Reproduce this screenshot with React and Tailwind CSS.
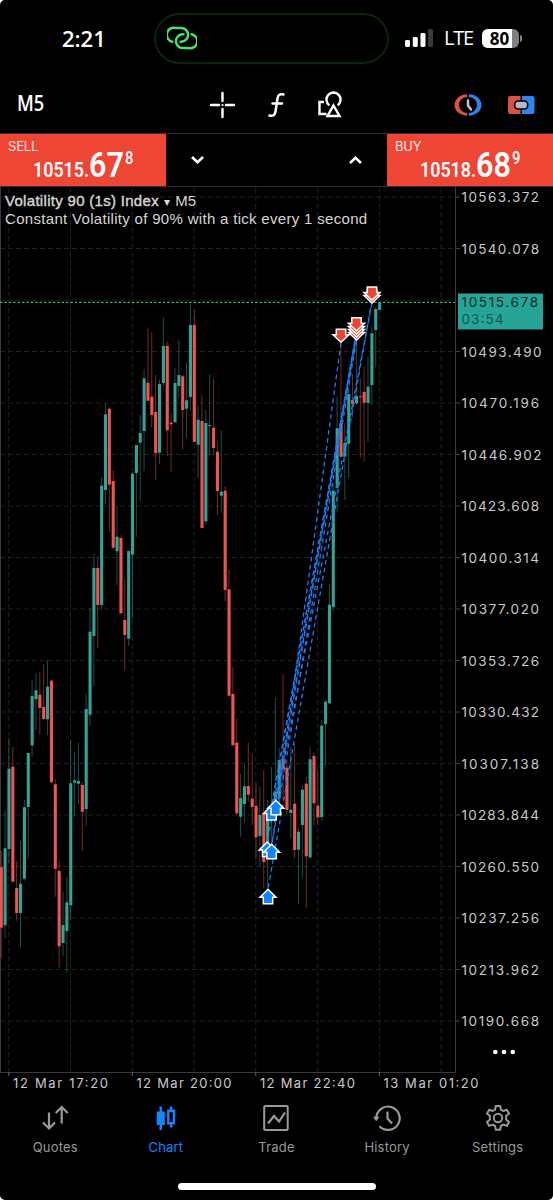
import React from "react";

// [high, bodyTop, bodyBottom, low, isUp]
const candles = [
  [851, 867.3, 927.7, 958, 0], [810, 848.3, 925.3, 938, 1], [738.3, 768.7, 849, 863, 1], [746.7, 766.7, 881.7, 882, 0],
  [860.7, 888, 913, 920.7, 0], [841, 883.7, 913, 946.7, 1], [800, 807.3, 878.7, 880.7, 1], [753, 753, 807, 858.3, 1],
  [680, 696, 745.3, 756.7, 1], [673.3, 690.3, 699.3, 730, 1], [671.7, 694.7, 708, 735, 0], [664.3, 707, 719, 720, 0],
  [660, 686.7, 719.3, 735, 1], [680, 680.7, 782.3, 782.3, 0], [778.7, 784.3, 868.7, 896.7, 0], [860, 871, 946.3, 967.7, 0],
  [891.7, 925, 943, 956, 1], [876.7, 902.3, 931, 972.7, 1], [740, 783.3, 905.3, 920, 1], [751.7, 780.3, 782.7, 816.7, 1],
  [742.7, 781, 783.7, 804, 1], [781.7, 785, 811.7, 850.7, 0], [693.3, 709, 809, 826, 1], [608.3, 631.7, 714.7, 726, 1],
  [553.3, 568, 636, 686.7, 1], [557.3, 568, 605, 647.7, 0], [477.3, 485.7, 605, 610, 1], [403.3, 414.3, 490, 504, 1],
  [408.3, 408.7, 484.7, 531.7, 0], [470, 481, 547.7, 549.3, 0], [506, 536.7, 551.3, 585, 1], [535, 538, 613.3, 613.3, 0],
  [579, 620, 635, 670, 0], [551, 551, 638.7, 646, 1], [472, 473.7, 554.7, 618.3, 1], [445, 445, 473, 536.7, 1],
  [415, 433, 442.7, 500.7, 1], [369.3, 378.3, 431, 471, 1], [328.3, 382.7, 400.7, 401.7, 0], [332.3, 396.7, 415, 427.3, 0],
  [375, 412, 453, 480, 0], [380, 384, 452.7, 464, 1], [317.3, 346, 383, 386.7, 1], [341.3, 346, 430.3, 456, 0],
  [412.7, 422.7, 424.3, 472.3, 0], [367.7, 383, 422.3, 422.3, 1], [340, 375, 386, 398.3, 1], [374.7, 376.3, 410, 449.3, 0],
  [362.7, 400.3, 408.7, 438, 1], [303.3, 325, 397, 410, 1], [310, 325, 442, 442, 0], [405.7, 419.7, 444.7, 477.7, 1],
  [395, 421, 528, 528, 0], [409.3, 423, 521.3, 525, 1], [374.3, 425, 426, 455, 1], [378.3, 427.7, 448, 455, 0],
  [441.7, 451.7, 491, 515, 0], [430.7, 491.7, 495.7, 512.3, 1], [486, 490.7, 590, 601.7, 0], [569.3, 589.3, 695.7, 696.7, 0],
  [666.7, 694, 745.3, 745.3, 0], [718.3, 742.7, 813.3, 815, 0], [773.3, 798, 816.7, 836.7, 1], [763.3, 786.3, 804, 822.7, 1],
  [742.7, 786, 794.7, 801.7, 0], [754, 798.7, 807, 825, 0], [783.3, 806, 837.3, 859, 0], [786.7, 815, 836, 866.7, 1],
  [770, 813, 862, 888.3, 0], [800, 815, 850, 890, 1], [767, 808, 815, 850, 1], [697, 792, 800, 810, 1],
  [747.7, 760, 798, 800, 1], [674, 759, 769, 800, 0], [760, 767.7, 810, 815, 0], [747, 809.7, 813, 838, 1],
  [744.3, 803.7, 850, 858.3, 0], [828, 831.7, 849.7, 904, 1], [785, 789.7, 825, 877.3, 1], [776.7, 783.7, 856.3, 908.3, 0],
  [747.3, 759.3, 857.3, 859, 1], [752.3, 756, 803.3, 825, 0], [769.3, 805.7, 817.3, 825, 0], [720, 725.7, 817, 821, 1],
  [700, 701.7, 724, 765.7, 1], [584, 604.7, 703.3, 704, 1], [483, 490.7, 607, 611.7, 1], [396.7, 428.3, 487.7, 511.7, 1],
  [338, 423.3, 456.7, 458, 0], [423.3, 442.7, 456.7, 500, 1], [390, 394, 443.7, 478.3, 1], [374, 400, 404, 417.3, 0],
  [330, 396, 403.3, 405, 1], [378.3, 396.3, 397.3, 457.7, 0], [366.7, 392, 402.7, 461.7, 0], [356.7, 386.7, 403, 441.7, 1],
  [326, 333.3, 385, 405, 1], [307.3, 309, 330, 367.3, 1], [302, 302.5, 310, 310, 1],
];

const prices = [
  "10563.372", "10540.078", "", "10493.490", "10470.196", "10446.902", "10423.608", "10400.314", "10377.020",
  "10353.726", "10330.432", "10307.138", "10283.844", "10260.550", "10237.256", "10213.962", "10190.668",
];

const times = [
  { x: 13, tick: 8.8, label: "12 Mar 17:20" },
  { x: 136.5, tick: 132.3, label: "12 Mar 20:00" },
  { x: 260, tick: 255.8, label: "12 Mar 22:40" },
  { x: 383.5, tick: 379.4, label: "13 Mar 01:20" },
];

// [entryX, entryY, exitX, exitY]
const trades = [
  [272, 844, 341, 343],
  [276, 802, 356.3, 332],
  [271.5, 806, 356.3, 335],
  [267.5, 842, 356.3, 338],
  [272, 844, 356.3, 341],
  [272, 806, 356.3, 334],
  [268, 889, 372, 300],
  [276, 802, 372, 303],
];

const buys = [[271.5, 805.5], [275.8, 800.3], [267.2, 842], [271.6, 844.3], [268, 889.3]];
const sells = [[341, 343.3], [356.5, 341], [356.5, 338], [356.5, 335], [356.5, 331.8], [372, 304], [372, 301]];

const tabs = [
  { name: "Quotes", icon: <QuotesIcon /> },
  { name: "Chart", icon: <ChartIcon />, active: true },
  { name: "Trade", icon: <TradeIcon /> },
  { name: "History", icon: <HistoryIcon /> },
  { name: "Settings", icon: <SettingsIcon /> },
];

function QuotesIcon() {
  return (
    <svg width="28" height="28" viewBox="0 0 28 28" fill="none" stroke="currentColor" strokeWidth="2.2">
      <path d="M8 8.500v16M2 18.500l6 6 6-6M20.700 19.500V3M14.700 9l6-6 6 6" />
    </svg>
  );
}

function ChartIcon() {
  return (
    <svg width="28" height="28" viewBox="0 0 28 28" fill="currentColor">
      <path d="M7.500 2.500h2.500v5h2.800v13.500h-2.800v5H7.500v-5H4.700V7.500h2.800z" />
      <path fillRule="evenodd" d="M17.900 2.500h2.500v3h2.800v15h-2.800v3h-2.500v-3h-2.800v-15h2.800zM17.500 8v10h3.300V8z" />
    </svg>
  );
}

function TradeIcon() {
  return (
    <svg width="28" height="28" viewBox="0 0 28 28" fill="none" stroke="currentColor" strokeWidth="2">
      <rect x="2.200" y="2" width="23.500" height="24" rx="1" />
      <path d="M6 19.500l6-7.500 5 5.500 6-9" strokeWidth="2.200" />
    </svg>
  );
}

function HistoryIcon() {
  return (
    <svg width="28" height="28" viewBox="0 0 28 28" fill="none" stroke="currentColor" strokeWidth="2.200">
      <path d="M3.300 14.500A11.700 11.700 0 1 1 6.500 22.300" />
      <path d="M14.500 7.500v7l4.500 5" />
      <path d="M0 12.800h6.500l-3.300 4.500z" fill="currentColor" stroke="none" />
    </svg>
  );
}

function SettingsIcon() {
  return (
    <svg width="28" height="28" viewBox="0 0 28 28" fill="none" stroke="currentColor" strokeWidth="2" strokeLinejoin="round">
      <path d="M11.800 2h4.400l.7 3.700 2.300 1.300 3.600-1.300 2.200 3.800-2.900 2.500v3.600l2.900 2.500-2.200 3.800-3.600-1.300-2.300 1.300-.7 3.900h-4.400l-.7-3.900-2.300-1.300-3.600 1.300L3 18.100l2.900-2.500V12L3 9.500l2.200-3.800L8.800 7l2.300-1.300z" />
      <circle cx="14" cy="14" r="4.200" />
    </svg>
  );
}

const StatusBar = () => (
  <div className="flex h-[76px] items-center">
    <div className="w-[154px] pl-[62px] text-[22px] leading-none font-semibold font-['Open_Sans']">2:21</div>
    <div className="flex h-[51px] w-[235px] items-center rounded-full border-2 border-[#0a260d] pl-[11px]">
      <svg width="30" height="24" viewBox="0 0 30 24" fill="none" stroke="#4be16c" strokeWidth="2.500" strokeLinecap="round">
        <path d="M5.300 15.700A6.900 6.900 0 0 1 8.300 1.900H14.200A6.900 6.900 0 0 1 14.200 15.700H13.600" />
        <path d="M24.700 8.300A6.900 6.900 0 0 1 21.700 22.100H15.800A6.900 6.900 0 0 1 15.800 8.300H16.400" />
      </svg>
    </div>
    <svg className="ml-4" width="28" height="18" viewBox="0 0 28 18">
      <rect x="0" y="11" width="5" height="7" rx="1.400" fill="#fff" />
      <rect x="7.800" y="8" width="5" height="10" rx="1.400" fill="#fff" />
      <rect x="15.500" y="4" width="5" height="14" rx="1.400" fill="#fff" />
      <rect x="23" y="0" width="5" height="18" rx="1.400" fill="#3a3a3a" />
    </svg>
    <span className="ml-[11px] w-[27px] text-[20px] leading-none tracking-[-1.2px] font-['Open_Sans']">LTE</span>
    <div className="ml-[11px] flex h-[19px] w-[37px] items-center rounded-[6px] bg-[#808080]">
      <span className="flex h-[19px] w-[30px] items-center justify-center rounded-l-[6px] bg-white pl-[5px] text-[17px] leading-[19px] font-bold text-black font-['Open_Sans']">
        80
      </span>
    </div>
    <div className="ml-px h-[7px] w-[2px] rounded-r-full bg-[#808080]" />
  </div>
);

const Toolbar = () => (
  <div className="flex h-[57px] items-center">
    <span className="w-[209px] pl-[17px]">
      <span className="inline-block origin-left scale-x-[0.87] text-[21px] leading-none font-semibold font-['Open_Sans']">M5</span>
    </span>
    <svg width="27" height="28" viewBox="0 0 27 28" stroke="#fff" strokeWidth="2.400" strokeLinecap="round">
      <path d="M13.500 2v8M13.500 18v8M2 14h8M17 14h8" />
      <path d="M13.500 14h.01" strokeWidth="2.200" />
    </svg>
    <svg className="ml-8" width="17" height="26" viewBox="0 0 17 26" fill="none" stroke="#fff" strokeWidth="2.500" strokeLinecap="round">
      <path d="M15.500 2.500c-3.500-1-5.500.5-6 4L7.500 19.500c-.6 3.600-2.500 5-6 4M4.500 11.500h9.500" />
    </svg>
    <svg className="ml-[33px]" width="24" height="27" viewBox="0 0 24 27" fill="none" stroke="#fff" strokeWidth="2.400">
      <path d="M6 11H1.500v12H8.500" />
      <path d="M11.400 14.200a7 7 0 1 1 8.200 0" />
      <path d="M15.500 14.500l6 10.500h-12z" />
    </svg>
    <svg className="ml-[112px]" width="28" height="28" viewBox="0 0 28 28" fill="none">
      <path d="M13.200 3.300A12.700 10.700 0 0 0 13.200 24.700V22A8.200 8 0 0 1 13.200 6z" fill="#dc5145" />
      <path d="M14.800 3.300A12.700 10.700 0 0 1 14.800 24.700V22A8.200 8 0 0 0 14.800 6z" fill="#2f83ee" />
      <path d="M14 9.500v5l3 4" stroke="#c2c9cf" strokeWidth="2.400" strokeLinecap="round" />
    </svg>
    <svg className="ml-[26px]" width="27" height="20" viewBox="0 0 27 20">
      <path d="M2 1h10.500v18H2a2 2 0 0 1-2-2V3a2 2 0 0 1 2-2z" fill="#dc5145" />
      <path d="M13.800 1h10.700a2 2 0 0 1 2 2v14a2 2 0 0 1-2 2H13.800z" fill="#2f83ee" />
      <rect x="6.700" y="6" width="13" height="8" rx="3.500" fill="#aebbc6" stroke="#000" strokeWidth="1.600" />
    </svg>
  </div>
);

const PriceButton = ({ side, whole, pips, frac }) => (
  <button className="flex h-full w-[166px] flex-col bg-[#ef4535] pl-2 pt-1 text-left">
    <span className="text-[13px] leading-[16px] tracking-[-0.2px] text-[#ffe9e5] font-['Inter']">{side}</span>
    <span className="-mt-[7px] flex items-start pl-[25px] leading-none font-['Roboto']">
      <span className="mt-[13px] w-[56px]">
        <span className="block origin-left scale-x-[0.85] text-[21px] leading-none font-semibold">{whole}</span>
      </span>
      <span className="mt-px w-[36px]">
        <span className="block origin-left scale-x-[0.87] text-[35px] leading-none font-semibold">{pips}</span>
      </span>
      <span className="mt-[2px] block origin-left scale-x-[0.82] text-[18px] leading-none font-medium">{frac}</span>
    </span>
  </button>
);

const QuotePanel = () => (
  <div className="flex h-[54px] items-center border-y border-[#333]">
    <PriceButton side="SELL" whole="10515." pips="67" frac="8" />
    <div className="flex flex-1 items-center justify-between px-[25px]">
      <svg width="13" height="8" viewBox="0 0 13 8" fill="none" stroke="#fff" strokeWidth="2.600">
        <path d="M1 1l5.500 5.200L12 1" />
      </svg>
      <svg width="13" height="8" viewBox="0 0 13 8" fill="none" stroke="#fff" strokeWidth="2.600">
        <path d="M1 7l5.500-5.200L12 7" />
      </svg>
    </div>
    <PriceButton side="BUY" whole="10518." pips="68" frac="9" />
  </div>
);

const PriceChart = () => (
  <svg className="block" width="553" height="907" viewBox="0 187 553 907" fontFamily="Inter, sans-serif">
    {/* GRID */}
    <g stroke="#212121" strokeWidth="1" strokeDasharray="5 3">
      {prices.map((p, i) => (
        <path key={i} d={`M0 ${197 + i * 51.5}H455`} />
      ))}
      {[8.8, 70.5, 132.3, 194.1, 255.8, 317.6, 379.4, 441.1].map((x) => (
        <path key={x} d={`M${x} 188V1072`} />
      ))}
    </g>
    <path d="M.5 187V1072.500H455.500V187" fill="none" stroke="#3a3a3a" />

    {/* CANDLES */}
    {candles.map(([high, top, bottom, low, up], i) => {
      const x = 1.2 + i * 3.861;
      const color = up ? "#36a195" : "#ec5652";
      return (
        <g key={i}>
          <path d={`M${x} ${high}V${low}`} stroke={color} strokeOpacity="0.55" strokeWidth="0.9" />
          <rect x={x - 1.5} y={top} width="3.100" height={Math.max(bottom - top, 1)} fill={color} />
        </g>
      );
    })}

    <path d="M0 302.300H455" stroke="#36a89b" strokeWidth="1.200" strokeDasharray="2.500 1.900" />

    {/* TRADES */}
    <g stroke="#1b7df0" strokeWidth="1.300" strokeDasharray="4.500 3.500">
      {trades.map(([x1, y1, x2, y2], i) => (
        <path key={i} d={`M${x2} ${y2}L${x1} ${y1}`} />
      ))}
    </g>
    {buys.map(([x, y], i) => (
      <path
        key={i}
        d={`M${x} ${y}l8 8h-3.300v6.500h-9.400v-6.500h-3.300z`}
        fill="#0f84fb"
        stroke="#fff"
        strokeWidth="1.500"
      />
    ))}
    {sells.map(([x, y], i) => (
      <path
        key={i}
        d={`M${x} ${y - 1}l8-7.500h-3.300v-5.500h-9.400v5.500h-3.300z`}
        fill="#f04231"
        stroke="#fff"
        strokeWidth="1.500"
      />
    ))}

    {/* PRICE AXIS */}
    <g fill="#c9c9c9" fontSize="13.500">
      {prices.map((p, i) =>
        p ? (
          <g key={p}>
            <path d={`M456 ${197 + i * 51.5}h4`} stroke="#444" />
            <text x="461.500" y={202 + i * 51.5} textLength={p.endsWith("90") || p.endsWith("902") ? 80 : 77.5}>
              {p}
            </text>
          </g>
        ) : null
      )}
      {times.map((t) => (
        <g key={t.x}>
          <path d={`M${t.tick} 1072v4`} stroke="#666" />
          <text x={t.x} y="1088" fontSize="13" textLength="95">
            {t.label}
          </text>
        </g>
      ))}
    </g>
    <rect x="458" y="293.500" width="85" height="36" fill="#26a498" />
    <g fontSize="13.500">
      <text x="461.500" y="307.300" textLength="76.500" fill="#072b28">10515.678</text>
      <text x="461.500" y="324.300" textLength="42" fill="#0b564f">03:54</text>
    </g>
    <g fill="#fff">
      <circle cx="495.300" cy="1052" r="2.300" />
      <circle cx="504" cy="1052" r="2.300" />
      <circle cx="512.800" cy="1052" r="2.300" />
    </g>
  </svg>
);

const App = () => {
  return (
    <div className="bg-white">
      <div className="flex h-[1200px] w-[553px] flex-col overflow-hidden rounded-[5px] bg-black text-white">
        <StatusBar />
        <Toolbar />
        <QuotePanel />

        <div className="relative">
          <PriceChart />
          <div className="absolute left-[5px] top-[4px] whitespace-nowrap text-[15px] leading-[19px] text-[#d6d6d6] font-['Liberation_Sans']">
            <p className="h-[19px] tracking-[0.3px]">
              <span className="[-webkit-text-stroke:0.4px]">Volatility 90 (1s) Index</span>
              <span className="px-[5px] text-[12px] leading-none">▾</span>
              <span className="tracking-normal">M5</span>
            </p>
            <p className="-mt-px h-[19px] tracking-[0.31px]">Constant Volatility of 90% with a tick every 1 second</p>
          </div>
        </div>

        <nav className="flex h-[66px] pt-2.5">
          {tabs.map((tab) => (
            <div
              key={tab.name}
              className={`flex flex-1 flex-col items-center font-['Inter'] ${tab.active ? "text-[#1684fc]" : "text-[#999]"}`}
            >
              {tab.icon}
              <span className="mt-[6px] text-[13px] leading-[18px] tracking-[0.2px]">{tab.name}</span>
            </div>
          ))}
        </nav>

        <div className="mx-auto mt-[23px] h-[7px] w-[198px] rounded-full bg-white" />
      </div>
    </div>
  );
};

export default App;
